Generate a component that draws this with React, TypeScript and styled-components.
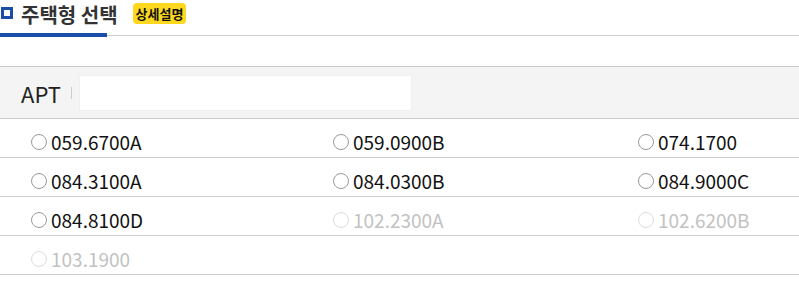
import styled, { createGlobalStyle } from "styled-components";

const GlobalStyle = createGlobalStyle`
  body {
    margin: 0;
    background: #ffffff;
    font-family: "Noto Sans CJK KR", "Noto Sans", sans-serif;
  }
`;

type Option = { label: string; disabled?: boolean };

const rows: Option[][] = [
  [{ label: "059.6700A" }, { label: "059.0900B" }, { label: "074.1700" }],
  [{ label: "084.3100A" }, { label: "084.0300B" }, { label: "084.9000C" }],
  [
    { label: "084.8100D" },
    { label: "102.2300A", disabled: true },
    { label: "102.6200B", disabled: true },
  ],
  [{ label: "103.1900", disabled: true }],
];

export default function App() {
  return (
    <Page>
      <GlobalStyle />
      <Header>
        <Tab>
          <TabLabel>
            <TabIcon />
            <TabTitle>주택형 선택</TabTitle>
          </TabLabel>
          <TabBar />
        </Tab>
        <Badge>상세설명</Badge>
      </Header>

      <Panel>
        <FilterBar>
          <FilterLabel>APT</FilterLabel>
          <Divider />
          <SearchBox />
        </FilterBar>

        {rows.map((row, i) => (
          <Row key={i}>
            {row.map((opt) => (
              <Item key={opt.label} $disabled={opt.disabled}>
                <Radio $disabled={opt.disabled} />
                {opt.label}
              </Item>
            ))}
          </Row>
        ))}
      </Panel>
    </Page>
  );
}

const Page = styled.div`
  width: 799px;
`;

const Header = styled.div`
  height: 35px;
  display: flex;
  align-items: flex-start;
  border-bottom: 1px solid #cccccc;
`;

const Tab = styled.div`
  display: flex;
  flex-direction: column;
  flex-shrink: 0;
  margin-bottom: -2px;
`;

const TabLabel = styled.div`
  height: 33px;
  display: flex;
  align-items: flex-start;
  gap: 8px;
  padding-left: 1px;
`;

const TabBar = styled.div`
  width: 107px;
  height: 4px;
  background: #1a4ea8;
`;

const TabIcon = styled.span`
  width: 12px;
  height: 12px;
  margin-top: 7px;
  border: 3px solid #1a4ea8;
  box-sizing: border-box;
  flex-shrink: 0;
`;

const TabTitle = styled.span`
  font-size: 20px;
  font-weight: 700;
  line-height: 29px;
  color: #333333;
  white-space: nowrap;
`;

const Badge = styled.span`
  margin-top: 3px;
  margin-left: 15px;
  height: 21px;
  padding: 0 3px;
  display: flex;
  align-items: center;
  background: #fdd81f;
  border-radius: 4px;
  font-size: 13px;
  font-weight: 700;
  color: #111111;
  white-space: nowrap;
`;

const Panel = styled.div`
  margin-top: 30px;
  border-top: 1px solid #cccccc;
`;

const FilterBar = styled.div`
  height: 52px;
  display: flex;
  align-items: center;
  padding-left: 21px;
  background: #f4f4f4;
  border-bottom: 1px solid #cccccc;
  box-sizing: border-box;
`;

const FilterLabel = styled.span`
  font-size: 22px;
  color: #222222;
  line-height: 1;
`;

const Divider = styled.span`
  width: 1px;
  height: 12px;
  margin: 0 7px 0 10px;
  background: #cccccc;
`;

const SearchBox = styled.div`
  width: 333px;
  height: 36px;
  background: #ffffff;
  border: 1px solid #f0f0f0;
  box-sizing: border-box;
`;

const Row = styled.div`
  height: 39px;
  display: grid;
  grid-template-columns: 302px 305px 1fr;
  padding: 11px 0 0 31px;
  border-bottom: 1px solid #cccccc;
  box-sizing: border-box;
`;

const Item = styled.label<{ $disabled?: boolean }>`
  display: flex;
  align-items: center;
  height: 24px;
  font-size: 19px;
  line-height: 24px;
  color: ${(p) => (p.$disabled ? "#c2c2c2" : "#111111")};
`;

const Radio = styled.span<{ $disabled?: boolean }>`
  width: 16px;
  height: 16px;
  margin-right: 4px;
  border-radius: 50%;
  border: 1.5px solid ${(p) => (p.$disabled ? "#dcdcdc" : "#999999")};
  background: #ffffff;
  box-sizing: border-box;
  flex-shrink: 0;
`;
